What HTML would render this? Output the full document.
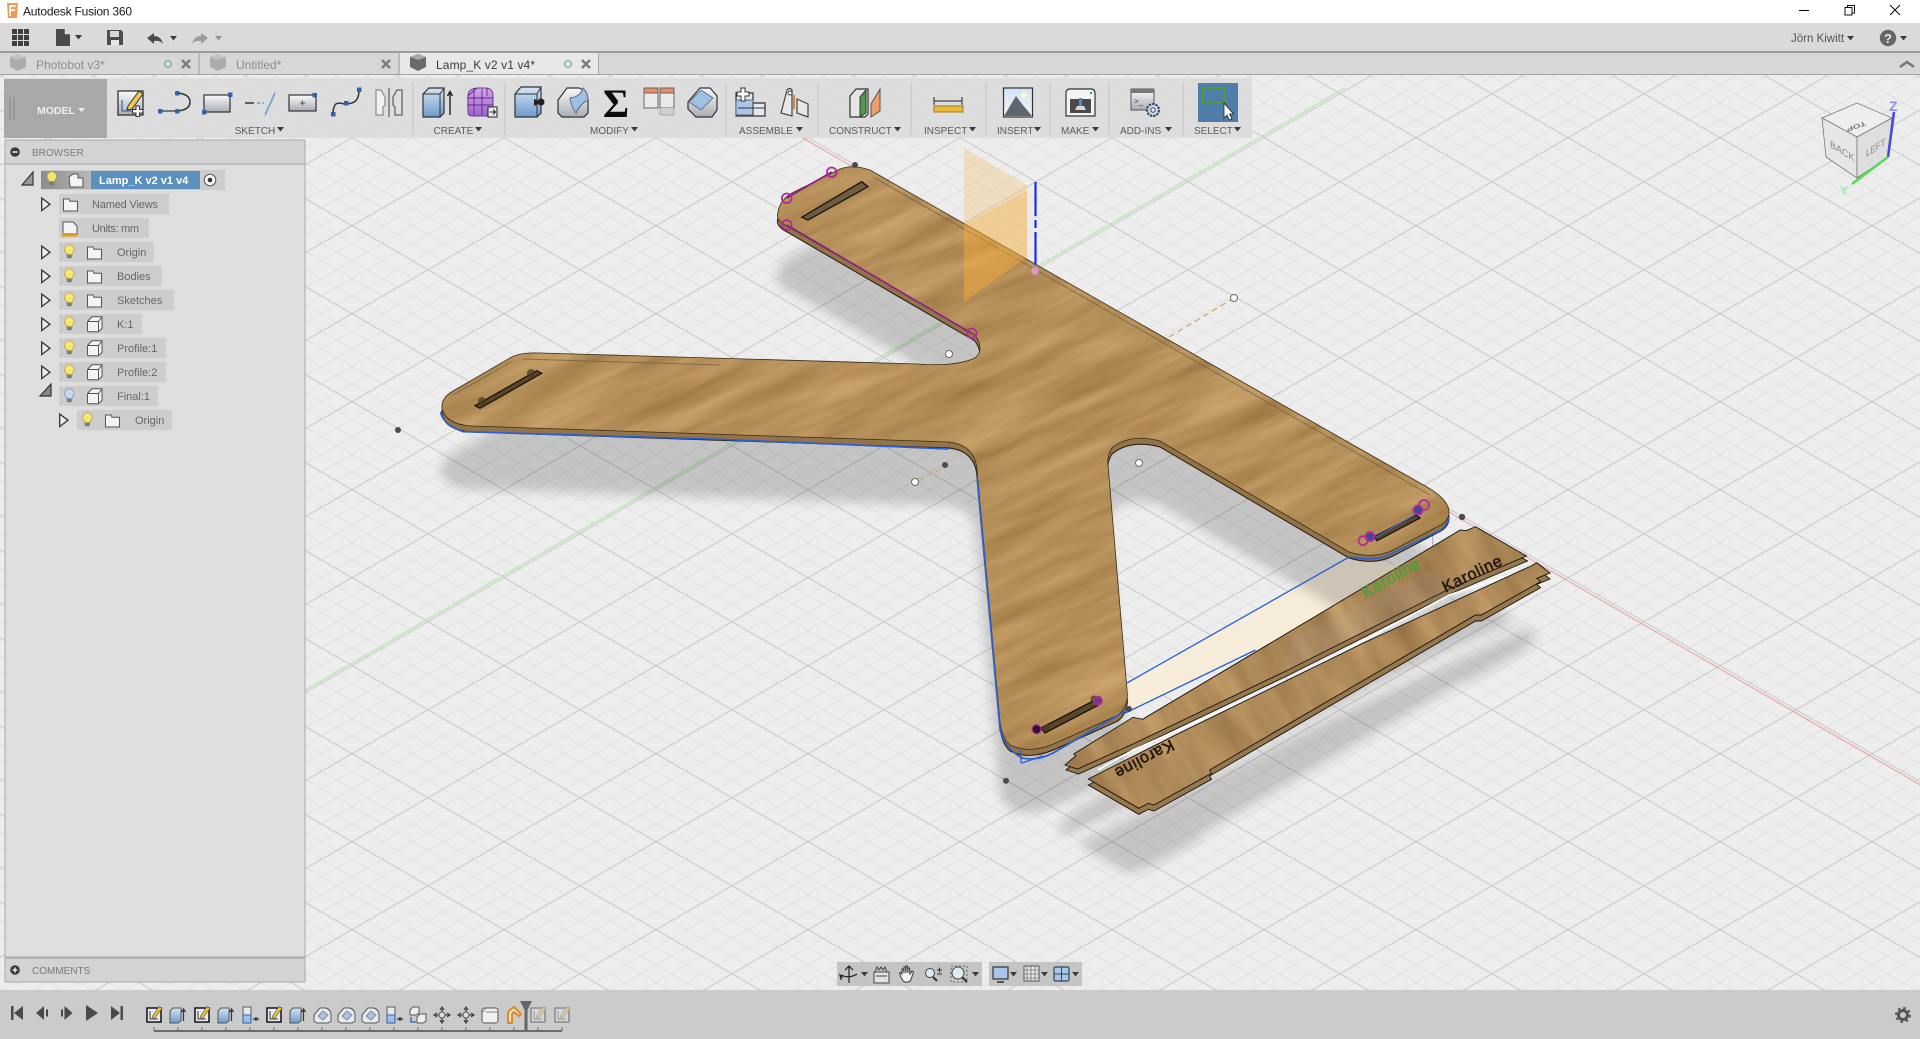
<!DOCTYPE html>
<html><head><meta charset="utf-8"><title>Autodesk Fusion 360</title>
<style>
html,body{margin:0;padding:0;width:1920px;height:1039px;background:#ededed;overflow:hidden}
svg{display:block;font-family:"Liberation Sans",sans-serif}
.ul{font-size:10px;fill:#5a5a5a}
.tr{font-size:11px;fill:#666}
</style></head><body>
<svg width="1920" height="1039" viewBox="0 0 1920 1039" xmlns="http://www.w3.org/2000/svg">
<defs>
<pattern id="grid" patternUnits="userSpaceOnUse" width="152" height="88" patternTransform="translate(504 665.67)">
<path fill="none" stroke="#e0e0e0" stroke-width=".9" d="M0-70.4L152 17.6M0-52.8L152 35.2M0-35.2L152 52.8M0-17.6L152 70.4M0 17.6L152 105.6M0 35.2L152 123.2M0 52.8L152 140.8M0 70.4L152 158.4M0 17.6L152-70.4M0 35.2L152-52.8M0 52.8L152-35.2M0 70.4L152-17.6M0 105.6L152 17.6M0 123.2L152 35.2M0 140.8L152 52.8M0 158.4L152 70.4"/>
<path fill="none" stroke="#c8c8c8" stroke-width="1" d="M0-88L152 0M0 0L152 88M0 88L152 176M0 0L152-88M0 88L152 0M0 176L152 88"/>
</pattern>
<filter id="wood" filterUnits="userSpaceOnUse" x="0" y="0" width="1600" height="1500" color-interpolation-filters="sRGB">
<feTurbulence type="fractalNoise" baseFrequency="0.008 0.06" numOctaves="4" seed="7"/>
<feColorMatrix type="matrix" values=".22 0 0 0 .6  .21 0 0 0 .455  .2 0 0 0 .25  0 0 0 0 1"/>
</filter>
<filter id="wood2" filterUnits="userSpaceOnUse" x="0" y="0" width="1200" height="900" color-interpolation-filters="sRGB">
<feTurbulence type="fractalNoise" baseFrequency="0.035 0.008" numOctaves="3" seed="11"/>
<feColorMatrix type="matrix" values=".27 0 0 0 .55  .25 0 0 0 .415  .2 0 0 0 .25  0 0 0 0 1"/>
</filter>
<pattern id="wp" patternUnits="userSpaceOnUse" width="1600" height="1500" patternTransform="translate(200 -200) rotate(-24 800 700)"><rect width="1600" height="1500" filter="url(#wood)"/></pattern>
<pattern id="wq" patternUnits="userSpaceOnUse" width="1200" height="900" patternTransform="translate(700 200) rotate(-30 600 450)"><rect width="1200" height="900" filter="url(#wood2)"/></pattern>
<filter id="blur" x="-20%" y="-20%" width="140%" height="140%"><feGaussianBlur stdDeviation="5.5"/></filter>
<path id="board" d="M778 212Q780 200 792 193L840 169Q853 164 870 170L1427 487Q1449 500 1449 512Q1449 522 1437 527L1395 549Q1375 560 1349 552L1160 441Q1130 433 1112 448Q1107 455 1108 465L1127 690Q1129 706 1118 715L1058 742Q1030 755 1010 745Q1002 738 1000 722L977 470Q975 445 949 442L471 426Q445 424 442 408Q441 398 453 391L510 358Q520 352 540 353L918 364Q955 367 975 358Q985 350 975 335L787 226Q775 220 778 212Z"/>
<polygon id="sa" points="1065,765 1075.7,756 1073.8,754 1133,717.3 1142.6,719.3 1460.3,530 1466,530.7 1475.6,526.7 1526.5,556 1449,589 1286,671 1133,744 1077.6,769"/>
<polygon id="sb" points="1088.3,779 1179,733.3 1362.7,643.3 1531,566 1536.8,562.7 1550,573 1536.8,578.3 1540.6,581.7 1481.3,615 1475.6,615 1209.6,770 1211.5,773.3 1154,805 1148.4,803.3 1138.8,808.3"/>
<linearGradient id="g1" x1="0" y1="0" x2="0" y2="1"><stop offset="0" stop-color="#fbfbfb"/><stop offset="1" stop-color="#a8adb4"/></linearGradient>
<linearGradient id="gb" x1="0" y1="0" x2="0" y2="1"><stop offset="0" stop-color="#d5e4f3"/><stop offset="1" stop-color="#6d9bcd"/></linearGradient>
<linearGradient id="gp" x1="0" y1="0" x2="0" y2="1"><stop offset="0" stop-color="#d9a4ea"/><stop offset="1" stop-color="#9b62d0"/></linearGradient>
<linearGradient id="root" x1="0" y1="0" x2="1" y2="0"><stop offset="0" stop-color="#8c8c8c"/><stop offset="1" stop-color="#b8b8b8"/></linearGradient>
<linearGradient id="sky" x1="0" y1="0" x2="0" y2="1"><stop offset="0" stop-color="#cfe3f7"/><stop offset="1" stop-color="#f3f4f0"/></linearGradient>
<path id="c" d="M0 0h7l-3.5 4.5z" fill="#3a3a3a"/>
<g id="bulb"><path d="M0 4.5a4.8 4.8 0 1 1 9.6 0c0 2.2-1.8 3-2 5H2c-.2-2-2-2.8-2-5z" fill="#f8e66a" stroke="#a89a50" stroke-width=".7"/><rect x="2.3" y="9.7" width="5" height="3.6" rx="1" fill="#7a7a82"/></g>
<g id="bulbb"><path d="M0 4.5a4.8 4.8 0 1 1 9.6 0c0 2.2-1.8 3-2 5H2c-.2-2-2-2.8-2-5z" fill="#c5d8f2" stroke="#7d8aa8" stroke-width=".7"/><rect x="2.3" y="9.7" width="5" height="3.6" rx="1" fill="#7a7a82"/></g>
<path id="fold" d="M.5 1h5.5l1 2.2h7.5v9.800H.5z" fill="#f4f4f4" stroke="#555" stroke-width="1"/>
<path id="cube" d="M.5 5.500L5 .8h10v11.500l-3.500 3.500H2q-1.500 0-1.500-1.500zM.8 5.500H11.500V15.500M11.500 5.500L15 1" fill="#f4f4f4" stroke="#555" stroke-width="1"/>
<path id="tri" d="M.7 0L9 6.300.7 12.600z" fill="#eee" stroke="#333" stroke-width="1.300"/>
<g id="tS"><rect x="-7" y="1" width="14" height="14" fill="#e8eef6" stroke="#111" stroke-width="1.500"/><path d="M-4 4v8h8" fill="none" stroke="#333"/><path d="M-2 10L5-.5 8 1.500 0 12z" fill="#f0c53a" stroke="#444" stroke-width=".6"/></g>
<g id="tE"><path d="M-8 4l3-3h8v13l-3 2h-8z" fill="url(#gb)" stroke="#555"/><path d="M5.500 14V2M3.500 5l2-3 2 3" fill="none" stroke="#333" stroke-width="1.200"/></g>
<g id="tR"><rect x="-7" y="0" width="8" height="8" fill="#e8e8e8" stroke="#555"/><rect x="-7" y="8" width="8" height="8" fill="#9fc0e4" stroke="#2d5fa8"/><path d="M3 12h6M6 10v4" stroke="#222" stroke-width="1.300"/></g>
<g id="tF"><path d="M-8 8l6-7h6q5 2 5 7v6l-3 2h-11l-3-2z" fill="#e8ecf1" stroke="#555"/><path d="M-4 9l5-5 5 4-5 5z" fill="#a8c3e0" stroke="#88a"/></g>
<g id="tM"><path d="M0 1v14M-8 8h16M-2 3l2-3 2 3M-2 13l2 3 2-3M-5 6l-3 2 3 2M5 6l3 2-3 2" fill="none" stroke="#444" stroke-width="1.200"/><circle r="3" cy="8" fill="#ddd" stroke="#555"/></g>
</defs>

<!-- viewport -->
<rect width="1920" height="1039" fill="#ededed"/>
<rect y="74" width="1920" height="925" fill="url(#grid)"/>
<path d="M305 690.3L1345 88" stroke="#b7e6ae" stroke-width="1.300" fill="none"/>
<path d="M740 101.600L1920 784.700" stroke="#eba8a8" stroke-width="1.200" fill="none"/>

<!-- construction plane -->
<polygon points="1127,683 1347,558 1433,570 1255,650 1125,713" fill="#f8ecd8" opacity=".9"/>

<!-- shadows -->
<g filter="url(#blur)" opacity=".17">
<use href="#board" transform="translate(-1 63)"/>
<g transform="translate(-10 65)"><use href="#sa"/><use href="#sb"/></g>
</g>

<path d="M1432.700 510V570L1294 635" stroke="#8e94ad" stroke-width="1" fill="none" opacity=".8"/>
<path d="M918 481L949 465M1169 337L1234 298" stroke="#d9a772" stroke-width="1.400" stroke-dasharray="6 4" fill="none"/>

<!-- board -->
<use href="#board" transform="translate(0 6)" fill="#937448" stroke="#21180c" stroke-width="1"/>
<use href="#board" fill="url(#wp)" stroke="#3a2c16" stroke-width=".8"/>
<path d="M873 177L1430 495M523 359L720 365M453 395L513 361" stroke="#6d5a44" stroke-width="1" fill="none" opacity=".7"/>

<!-- slots -->
<polygon points="801.700,217.300 861.700,181.700 868,186.700 808,220" fill="#6e5c40" stroke="#1c140a" stroke-width="1.300"/>
<polygon points="475,405.700 536.700,370.700 541.700,373.300 480,408.300" fill="#5a4628" stroke="#1c140a" stroke-width="1.300"/>
<polygon points="1041,728 1095,700 1098.600,705 1045,733" fill="#5a4628" stroke="#1c140a" stroke-width="1.300"/>
<polygon points="1374,536.700 1416,515 1420,518 1377,540.700" fill="#5a4628" stroke="#1c140a" stroke-width="1.300"/>
<g fill="#4a3a22" opacity=".75"><circle cx="482" cy="401" r="4"/><circle cx="531" cy="373" r="4"/><circle cx="1094" cy="699" r="3.500"/><circle cx="1046" cy="728" r="3.500"/></g>
<path d="M1376 537L1418 513" stroke="#3a62d0" stroke-width="1.200"/>

<!-- selection contours -->
<path d="M440.700 411.700Q442 424 463 431.700L720 439.300L949 449M977 477L1000 729Q1004 748 1022 758Q1040 762 1060 749L1127 710M1449 517Q1447 528 1437 532L1393 553Q1378 562 1349 557" fill="none" stroke="#2d5fd0" stroke-width="1.700"/>
<path d="M1127 683L1347.400 558M1125.400 713L1255.500 650M1021.300 763.300L1043 755.700M1021 750V763" fill="none" stroke="#2d5fd0" stroke-width="1.300"/>
<path d="M786.700 225L971.700 333.300M786.700 198L831.700 172" stroke="#8a1f8a" stroke-width="1.600" fill="none"/>
<g fill="none" stroke="#b02a9c" stroke-width="1.800">
<circle cx="786.700" cy="198.300" r="4.800"/><circle cx="831.700" cy="172.300" r="4.800"/><circle cx="786.700" cy="225" r="4.800"/><circle cx="971.700" cy="333.300" r="4.800"/>
<circle cx="1424" cy="505" r="5"/><circle cx="1418" cy="510" r="4.500" fill="#3a4a90"/><circle cx="1370" cy="536.700" r="4.500" fill="#3a4a90"/><circle cx="1363" cy="540.700" r="4.500"/><circle cx="1098" cy="700.700" r="4" fill="#6a3a80"/>
</g>
<circle cx="1036.600" cy="729.300" r="4.500" fill="#3a0e30" stroke="#b02a9c" stroke-width="1.200"/>
<circle cx="1035" cy="271" r="4" fill="#d9a0b8" stroke="#c080a8"/>
<g fill="#4b4b4b"><circle cx="855" cy="165" r="3"/><circle cx="1462" cy="517" r="3.200"/><circle cx="1006" cy="780.700" r="3"/><circle cx="1129" cy="709" r="3"/><circle cx="398" cy="430" r="3"/><circle cx="945" cy="465" r="3"/></g>
<g fill="#fff" stroke="#6b6b6b"><circle cx="949" cy="354" r="3.500"/><circle cx="1139" cy="463" r="3.500"/><circle cx="915" cy="482" r="3.500"/><circle cx="1234" cy="298" r="3.500"/></g>

<!-- orange plane & axis -->
<polygon points="964,148 1027,185 1027,257 964,302" fill="#f6b54a" opacity=".28"/>
<polygon points="964,225 1027,190 1027,257 964,302" fill="#f3a931" opacity=".3"/>
<path d="M1035.500 182V216M1035.500 220V228M1035.500 232V265" stroke="#1a2ee0" stroke-width="2.200" fill="none"/>

<!-- strips -->
<g fill="#96784e" stroke="#15100a" stroke-width=".9"><use href="#sa" transform="translate(1 5)"/><use href="#sb" transform="translate(0 6)"/></g>
<path d="M1533 568L1449 595L1286 682L1133 750L1098 770" stroke="#fff" stroke-width="1.600" fill="none"/>
<g stroke="#17110a" stroke-width=".9"><use href="#sa" fill="url(#wq)"/><use href="#sb" fill="url(#wq)"/></g>
<polygon points="1294,635 1432.700,570 1449,589 1286,671" fill="#a9a3ae" opacity=".13"/>
<text x="1391" y="583" text-anchor="middle" font-size="16" fill="#46a23c" stroke="#46a23c" stroke-width=".4" transform="rotate(-29 1391 577)" letter-spacing=".8">Karoline</text>
<text x="1472" y="579" text-anchor="middle" font-size="16" fill="#241a0e" stroke="#241a0e" stroke-width=".6" transform="rotate(-26 1472 573)" letter-spacing=".8">Karoline</text>
<text x="1144.600" y="766" text-anchor="middle" font-size="16" fill="#241a0e" stroke="#241a0e" stroke-width=".6" transform="rotate(152 1144.600 760)" letter-spacing=".8">Karoline</text>

<!-- ViewCube -->
<polygon points="1822,118 1857,103 1892,118 1857,137" fill="#eeeeee" stroke="#777" stroke-width=".8"/>
<polygon points="1822,118 1826,157 1857,178 1857,137" fill="#e6e6e6" stroke="#777" stroke-width=".8"/>
<polygon points="1857,137 1857,178 1888,157 1892,118" fill="#dedede" stroke="#777" stroke-width=".8"/>
<text transform="translate(1865 121) rotate(160) scale(1.100 .7)" font-size="9" fill="#777" font-weight="bold">TOP</text>
<text transform="matrix(.9 .55 0 1 1830 147)" font-size="10" fill="#888">BACK</text>
<text transform="matrix(.8 -.5 0 1 1866 157)" font-size="10" fill="#888">LEFT</text>
<path d="M1888 157L1894 112" stroke="#4a4ae0" stroke-width="2.600"/>
<path d="M1888 157L1852 184" stroke="#5ad85a" stroke-width="2.600"/>
<text x="1889" y="111" font-size="14" font-weight="bold" fill="#8f8fe8">Z</text>
<text x="1840" y="195" font-size="13" font-weight="bold" fill="#a5eca5">Y</text>

<!-- title bar -->
<rect width="1920" height="23" fill="#fff"/>
<path d="M7 3h11l-1 15H8z" fill="#ef9a55"/><path d="M10 6h6M10 6v10M10 10h5" stroke="#fff" stroke-width="1.700" fill="none"/>
<text x="23" y="15.500" font-size="12" fill="#1a1a1a" textLength="109">Autodesk Fusion 360</text>
<path d="M1799 10.500h10" stroke="#111" stroke-width="1.100"/>
<path d="M1845 7.500h7v7.500h-7zM1847.500 7.500V5.500h7v7.500h-2.500" fill="none" stroke="#111" stroke-width="1"/>
<path d="M1890 5l10 10M1900 5l-10 10" stroke="#111" stroke-width="1.100"/>

<!-- quick toolbar -->
<rect y="23" width="1920" height="29" fill="#dadada"/>
<rect y="51" width="1920" height="2" fill="#9c9c9c"/>
<g fill="#3f3f3f"><rect x="12" y="29" width="5" height="5"/><rect x="18" y="29" width="5" height="5"/><rect x="24" y="29" width="5" height="5"/><rect x="12" y="35" width="5" height="5"/><rect x="18" y="35" width="5" height="5"/><rect x="24" y="35" width="5" height="5"/><rect x="12" y="41" width="5" height="5"/><rect x="18" y="41" width="5" height="5"/><rect x="24" y="41" width="5" height="5"/></g>
<path d="M56 29h9l5 5v12H56z" fill="#4a4a4a"/><path d="M65 29v5h5" fill="#ddd" stroke="#ddd" stroke-width=".5"/>
<use href="#c" x="75" y="35"/>
<path d="M107 30h14l2 2v13h-16z" fill="#4d4d4d"/><rect x="110" y="31" width="9" height="6" fill="#d8d8d8"/><rect x="111" y="40" width="8" height="5" fill="#e8e8e8"/>
<path d="M147 38l7-5v3q7 0 9 8-3-4-9-3v3z" fill="#4a4a4a"/><use href="#c" x="170" y="36"/>
<path d="M208 38l-7-5v3q-7 0-9 8 3-4 9-3v3z" fill="#9a9a9a"/><use href="#c" x="215" y="36" opacity=".45"/>
<text x="1791" y="42" font-size="11.500" fill="#555">Jörn Kiwitt</text><use href="#c" x="1847" y="36"/>
<circle cx="1888" cy="38" r="8.200" fill="#666"/><text x="1888" y="43" text-anchor="middle" font-size="13" font-weight="bold" fill="#e8e8e8">?</text><use href="#c" x="1900" y="36"/>

<!-- tabs -->
<rect y="53" width="1920" height="21" fill="#d7d7d7"/>
<rect y="74" width="1920" height="1" fill="#a4a4a4"/>
<rect x="198" y="53" width="2" height="21" fill="#bcbcbc"/><rect x="398" y="53" width="2" height="21" fill="#bcbcbc"/>
<rect x="400" y="53" width="198" height="21" fill="#e8e8e8"/><rect x="598" y="53" width="1" height="21" fill="#aaa"/>
<g opacity=".45"><path d="M10 57l8-3 8 3v10l-8 4-8-4z" fill="#7a7a7a"/><path d="M10 57l8 3 8-3-8-3z" fill="#aaa"/></g>
<g opacity=".45"><path d="M210 57l8-3 8 3v10l-8 4-8-4z" fill="#7a7a7a"/><path d="M210 57l8 3 8-3-8-3z" fill="#aaa"/></g>
<path d="M410 57l8-3 8 3v10l-8 4-8-4z" fill="#6a6a6a"/><path d="M410 57l8 3 8-3-8-3z" fill="#a8a8a8"/>
<text x="36" y="69" font-size="12" fill="#8c8c8c">Photobot v3*</text>
<text x="236" y="69" font-size="12" fill="#8c8c8c">Untitled*</text>
<text x="436" y="69" font-size="12" fill="#3c3c3c" textLength="99">Lamp_K v2 v1 v4*</text>
<g fill="none" stroke="#7fb39a" stroke-width="1.400"><circle cx="168" cy="64" r="3.400"/><circle cx="568" cy="64" r="3.400"/></g>
<g stroke="#7a7a7a" stroke-width="2.400" fill="none"><path d="M182 60l8 8M190 60l-8 8M382 60l8 8M390 60l-8 8M582 60l8 8M590 60l-8 8"/></g>
<path d="M1900 67l7-5 7 5" stroke="#777" stroke-width="2.600" fill="none"/>

<!-- main toolbar -->
<rect x="4" y="78" width="1248" height="60" fill="#dcdcdc" opacity=".96"/>
<rect x="4" y="79" width="103" height="59" fill="#a8a8a8"/>
<path d="M10 97v23M14 97v23" stroke="#838383"/>
<text x="37" y="114" font-size="10.500" font-weight="bold" fill="#efefef">MODEL</text><path d="M78 108h7l-3.500 4z" fill="#eee"/>
<g stroke="#c8c8c8" stroke-width="1.200"><path d="M413 83v52M505 83v52M726 83v52M818 83v52M911 83v52M986 83v52M1050 83v52M1109 83v52M1183 83v52"/></g>
<text class="ul" x="234.700" y="134">SKETCH</text><use href="#c" x="277" y="127"/>
<text class="ul" x="433.500" y="134">CREATE</text><use href="#c" x="475" y="127"/>
<text class="ul" x="590" y="134">MODIFY</text><use href="#c" x="631" y="127"/>
<text class="ul" x="739" y="134">ASSEMBLE</text><use href="#c" x="796" y="127"/>
<text class="ul" x="829" y="134">CONSTRUCT</text><use href="#c" x="894" y="127"/>
<text class="ul" x="924" y="134">INSPECT</text><use href="#c" x="969" y="127"/>
<text class="ul" x="997" y="134">INSERT</text><use href="#c" x="1034" y="127"/>
<text class="ul" x="1061" y="134">MAKE</text><use href="#c" x="1092" y="127"/>
<text class="ul" x="1120" y="134">ADD-INS</text><use href="#c" x="1165" y="127"/>
<text class="ul" x="1194" y="134">SELECT</text><use href="#c" x="1234" y="127"/>

<!-- sketch icons -->
<rect x="118" y="91" width="25" height="24" fill="url(#g1)" stroke="#333" stroke-width="1.300"/>
<path d="M122 100v11h11" stroke="#3a6bb5" stroke-width="1.300" fill="none"/>
<path d="M128 106l11-15 4 3-11 15-5 1z" fill="#f3c94a" stroke="#333" stroke-width="1"/>
<path d="M136 106h3.500v3.500h3.500v3.500h-3.500v3.500H136V113h-3.500v-3.500H136z" fill="#fff" stroke="#333" stroke-width="1"/>
<path d="M160 111h17" stroke="#555" stroke-width="1.500"/><path d="M177 93Q190 94 190 102T177 111" stroke="#333" stroke-width="1.500" fill="none"/>
<g fill="#3560a8"><rect x="158" y="109" width="4.500" height="4.500" rx="1"/><rect x="175" y="109" width="4.500" height="4.500" rx="1"/><rect x="175" y="91" width="4.500" height="4.500" rx="1"/></g>
<rect x="204" y="95" width="26" height="17" fill="url(#g1)" stroke="#333" stroke-width="1.200"/>
<g fill="#3560a8"><rect x="228" y="92.500" width="4.500" height="4.500"/><rect x="202" y="110" width="4.500" height="4.500"/></g>
<path d="M245 103h9" stroke="#333" stroke-width="1.500"/><path d="M257 103h3M262 103h2" stroke="#6fa0d5" stroke-width="1.500"/><path d="M265 115l10-22" stroke="#6f9fd5" stroke-width="1.600"/>
<rect x="289" y="95" width="27" height="16" fill="url(#g1)" stroke="#333" stroke-width="1.200"/><path d="M300 103h5M302.500 100.500v5" stroke="#555"/>
<rect x="312.500" y="93" width="4.500" height="4.500" fill="#3560a8"/>
<path d="M333 115C333 97 342 105 347 104S359 103 359 90" fill="none" stroke="#333" stroke-width="1.500"/>
<g fill="#3560a8"><rect x="331" y="112" width="4.500" height="4.500"/><rect x="344" y="101" width="4.500" height="4.500"/><rect x="357" y="87.500" width="4.500" height="4.500"/></g>
<path d="M376 90h5l4 7v8l-2 2v8h-7z" fill="#f0f0f0" stroke="#8a8a8a" stroke-width="1.200"/><path d="M389 88v29" stroke="#444"/><path d="M402 90h-5l-4 7v8l2 2v8h7z" fill="#dfdfdf" stroke="#666" stroke-width="1.300"/>
<!-- create -->
<path d="M423 94l6-6h15v25l-4 4h-17z" fill="url(#gb)" stroke="#333" stroke-width="1.200"/><path d="M423 94h17v23M440 94l4-6" fill="none" stroke="#333"/>
<path d="M450 115V92M447.500 96l2.500-4.500 2.500 4.500" fill="none" stroke="#222" stroke-width="1.400"/>
<path d="M468 96q0-8 11-8h6q8 0 8 8v17q0 3-4 3h-17q-4 0-4-4z" fill="url(#gp)" stroke="#6a3a90"/>
<path d="M467 98h26M467 105h26M474 89v26M482 89v26M468 96l9-8M487 88v8" stroke="#5a2c88" stroke-width=".9" fill="none"/>
<rect x="488" y="107" width="9" height="10" fill="#eee" stroke="#222"/><path d="M489.500 112h6M493 109.500l2.500 2.500-2.500 2.500" stroke="#222" fill="none"/>
<!-- modify -->
<path d="M515 94l6-7h20v26l-4 4h-22z" fill="url(#gb)" stroke="#333" stroke-width="1.200"/><path d="M515 94h22v23M537 94l4-7" fill="none" stroke="#333"/><path d="M534 99l8 3-8 4z" fill="#222"/><circle cx="541" cy="102" r="3.500" fill="#222"/>
<path d="M558 100l9-12h12q8 3 9 12v13l-4 4h-22l-4-4z" fill="url(#g1)" stroke="#333" stroke-width="1.200"/><path d="M570 98q10-1 13-10 5 5 5 12-8 4-12 13-5-7-6-15z" fill="#9ec0e5" stroke="#667"/>
<text x="616" y="117" text-anchor="middle" font-family="'Liberation Serif',serif" font-weight="bold" font-size="40" fill="#0c0c0c">Σ</text>
<g stroke="#666"><rect x="644" y="88" width="14" height="20" fill="#e9e9e9"/><rect x="644" y="88" width="14" height="5" fill="#ec8a62"/><rect x="660" y="88" width="14" height="20" fill="#e9e9e9"/><rect x="660" y="88" width="14" height="5" fill="#ec8a62"/></g>
<path d="M660 108v7h14v-7" fill="#cfcfcf" stroke="#aaa"/>
<path d="M688 102l12-14h10l7 8v14l-5 7h-16l-8-8z" fill="url(#g1)" stroke="#333" stroke-width="1.200"/><path d="M689 102l12-12 12 8-12 12z" fill="#9ec0e5" stroke="#678"/>
<!-- assemble -->
<path d="M736 93h17v10h12v13h-29z" fill="#e5e8ec" stroke="#333" stroke-width="1.200"/><rect x="736" y="100" width="17" height="15" fill="#a9c6e8" stroke="#567"/><path d="M753 103v13M738 108h27" stroke="#333"/>
<path d="M741 88h4v4h4v4h-4v5h-4v-5h-4v-4h4z" fill="#fff" stroke="#333"/>
<path d="M781 113l6-23q3-3 5 0v26zM797 99l11 5v13l-11-4z" fill="#e7e7e7" stroke="#444" stroke-width="1.200"/><path d="M794 95v14" stroke="#d8873c" stroke-width="2"/><circle cx="790" cy="93" r="2" fill="#fff" stroke="#444"/>
<!-- construct -->
<path d="M850 96l6-7h12v25l-3 3h-15z" fill="#e6e6e6" stroke="#333" stroke-width="1.200"/><path d="M860 97l6-7v23l-6 4z" fill="#4e9a4a" stroke="#333"/>
<path d="M871 104l9-15v22l-9 6z" fill="#ec9f68" stroke="#555"/>
<!-- inspect -->
<path d="M934 97v8M962 97v8M934 101h28" stroke="#444" stroke-width="1.200" fill="none"/>
<rect x="934" y="106" width="29" height="6" fill="#e9b93a" stroke="#9b7b22"/>
<!-- insert -->
<rect x="1003.500" y="88" width="29" height="29" fill="url(#sky)" stroke="#333" stroke-width="1.200"/>
<circle cx="1024" cy="95" r="3" fill="#fff8d0"/><path d="M1004 116l12-20 6 8 10 12z" fill="#5f6670"/>
<!-- make -->
<path d="M1066 93q0-4 4-4h21q4 0 4 4v23h-29z" fill="#f4f4f4" stroke="#333" stroke-width="1.200"/>
<rect x="1070" y="99" width="21" height="14" fill="#4a4a4a"/><path d="M1075 110h11l-2-4h-7z" fill="#d8d8d8"/><path d="M1080.500 98v8" stroke="#4e8ad0" stroke-width="3"/>
<rect x="1090" y="92" width="2" height="2" fill="#3c9a3c"/>
<!-- addins -->
<rect x="1131" y="89" width="23" height="21" fill="url(#g1)" stroke="#555"/><rect x="1131" y="89" width="23" height="4" fill="#777"/>
<text x="1134" y="104" font-size="8" fill="#333">&gt;_</text>
<circle cx="1153" cy="110" r="6" fill="#c8d8ea" stroke="#345" stroke-width="2" stroke-dasharray="2.400 1"/><circle cx="1153" cy="110" r="2.200" fill="#eef" stroke="#345"/>
<!-- select -->
<rect x="1198" y="83" width="40" height="39" fill="#517da9"/>
<rect x="1203" y="88" width="21" height="14" fill="none" stroke="#4c9b3e" stroke-width="2"/>
<path d="M1224 103v15l3-3 2.500 5 2.500-1-2.500-5h4z" fill="#fff" stroke="#222" stroke-width=".8"/>

<!-- browser panel -->
<rect x="5" y="140" width="300" height="817" fill="#dedede" stroke="#aaa"/>
<rect x="5" y="140" width="300" height="24" fill="#d3d3d3" stroke="#aaa"/>
<circle cx="15" cy="152" r="4.800" fill="#3a3a3a"/><path d="M12.500 152h5" stroke="#fff" stroke-width="1.400"/>
<text x="32" y="156" font-size="10" fill="#7a7a7a">BROWSER</text>
<g fill="#cdcdcd">
<rect x="41" y="170" width="184" height="20"/>
<rect x="59" y="194" width="110" height="20"/><rect x="59" y="218" width="90" height="20"/>
<rect x="59" y="242" width="95" height="20"/><rect x="59" y="266" width="103" height="20"/><rect x="59" y="290" width="115" height="20"/>
<rect x="59" y="314" width="83" height="20"/><rect x="59" y="338" width="107" height="20"/><rect x="59" y="362" width="107" height="20"/>
<rect x="59" y="386" width="99" height="20"/><rect x="77" y="410" width="95" height="20"/>
</g>
<rect x="41" y="171" width="50" height="18" fill="url(#root)"/><rect x="91" y="171" width="109" height="18" fill="#5b8fbe"/>
<text x="99" y="184" font-size="11" font-weight="bold" fill="#fff">Lamp_K v2 v1 v4</text>
<path d="M33 172v13H22z" fill="#999" stroke="#333" stroke-width="1.200"/>
<use href="#bulb" x="47" y="172"/>
<path d="M69 177l4-3h5v4h5v9H70z" fill="#f4f4f4" stroke="#555"/>
<circle cx="210" cy="180" r="5.800" fill="#f4f4f4" stroke="#555"/><circle cx="210" cy="180" r="2.300" fill="#333"/>
<use href="#tri" x="41" y="198"/><use href="#tri" x="41" y="246"/><use href="#tri" x="41" y="270"/><use href="#tri" x="41" y="294"/><use href="#tri" x="41" y="318"/><use href="#tri" x="41" y="342"/><use href="#tri" x="41" y="366"/><use href="#tri" x="59" y="414"/>
<path d="M51 384v12H40z" fill="#888" stroke="#333" stroke-width="1.200"/>
<use href="#fold" x="63" y="198"/>
<path d="M63 222h10l4 4v9H63z" fill="#f4f4f4" stroke="#555"/><rect x="62" y="233" width="15" height="3.500" fill="#d9a21e"/>
<use href="#bulb" x="64.500" y="245"/><use href="#bulb" x="64.500" y="269"/><use href="#bulb" x="64.500" y="293"/><use href="#bulb" x="64.500" y="317"/><use href="#bulb" x="64.500" y="341"/><use href="#bulb" x="64.500" y="365"/><use href="#bulbb" x="64.500" y="389"/><use href="#bulb" x="82.500" y="413"/>
<use href="#fold" x="87" y="246"/><use href="#fold" x="87" y="270"/><use href="#fold" x="87" y="294"/><use href="#fold" x="105" y="414"/>
<use href="#cube" x="87" y="316"/><use href="#cube" x="87" y="340"/><use href="#cube" x="87" y="364"/><use href="#cube" x="87" y="388"/>
<text class="tr" x="92" y="208" textLength="66">Named Views</text><text class="tr" x="92" y="232" textLength="47">Units: mm</text>
<text class="tr" x="117" y="256">Origin</text><text class="tr" x="117" y="280">Bodies</text><text class="tr" x="117" y="304">Sketches</text>
<text class="tr" x="117" y="328">K:1</text><text class="tr" x="117" y="352">Profile:1</text><text class="tr" x="117" y="376">Profile:2</text>
<text class="tr" x="117" y="400">Final:1</text><text class="tr" x="135" y="424">Origin</text>

<!-- comments -->
<rect x="5" y="958" width="300" height="24" fill="#d3d3d3" stroke="#aaa"/>
<circle cx="15" cy="970" r="4.800" fill="#3a3a3a"/><path d="M12.500 970h5M15 967.500v5" stroke="#fff" stroke-width="1.300"/>
<text x="32" y="974" font-size="10" fill="#7a7a7a">COMMENTS</text>

<!-- nav bar -->
<rect x="837" y="962" width="145" height="24" fill="#c4c4c4"/>
<rect x="989" y="962" width="93" height="24" fill="#c4c4c4"/>
<path d="M849 967v16M845 970l4-4 4 4M841 975q8 4 16-1M843 978l-3-3 1 5" stroke="#222" stroke-width="1.200" fill="none"/>
<use href="#c" x="861" y="972"/>
<rect x="874" y="972" width="15" height="11" fill="#e2e2e2" stroke="#444"/><path d="M876 976h11" stroke="#444"/><path d="M875 972l2-5 2 3 2-3 2 3 2-3 2 5" stroke="#444" fill="none"/>
<path d="M902 974v-5l1.500 0 .5 4v-6h1.500l.5 6 0-7h1.500l.5 7 0-5h1.500l.5 6 2-3 1.500 1-2 6q-1 4-4 4h-3q-3-2-5-9l1.500-.5z" fill="#f4f4f4" stroke="#333"/>
<circle cx="930" cy="973" r="4.500" fill="#dfe9f2" stroke="#444"/><path d="M933 977l4 4" stroke="#333" stroke-width="2"/><path d="M937 970h5M939.500 967.500v5M937 974h5" stroke="#333"/>
<rect x="951" y="966" width="16" height="16" fill="none" stroke="#666" stroke-dasharray="2 2"/><circle cx="958" cy="973" r="6" fill="#dcecee" stroke="#444"/><path d="M962 977l5 5" stroke="#333" stroke-width="2.200"/>
<use href="#c" x="972" y="972"/>
<rect x="993" y="967" width="15" height="12" fill="#a9c5e8" stroke="#333" stroke-width="1.200"/><path d="M997 982h7" stroke="#555" stroke-width="2"/>
<use href="#c" x="1010" y="972"/>
<rect x="1024" y="966" width="15" height="15" fill="#e5e5e5" stroke="#555"/><path d="M1027 966v15M1031 966v15M1035 966v15M1024 970h15M1024 974h15M1024 978h15" stroke="#777" stroke-width=".8"/>
<use href="#c" x="1041" y="972"/>
<rect x="1054" y="967" width="15" height="14" rx="1.500" fill="#a9c5e8" stroke="#345" stroke-width="1.200"/><path d="M1061.500 967v14M1054 974h15" stroke="#345"/>
<use href="#c" x="1072" y="972"/>

<!-- timeline -->
<rect y="990" width="1920" height="49" fill="#cbcbcb"/>
<g fill="#4a4a4a">
<path d="M11 1006h2.500v14H11zM23 1006v14l-9-7z"/>
<path d="M44 1006v14l-8-7zM46 1009.500h2v7h-2z"/>
<path d="M63 1009.500h-2v7h2zM64.500 1006v14l8-7z"/>
<path d="M86 1005v16l12-8z"/>
<path d="M111 1006v14l9-7zM120.500 1006h2.500v14h-2.500z"/>
</g>
<path d="M154 1031H562" stroke="#6b6b6b" stroke-width="2"/>
<path d="M154 1027v4M178 1027v4M202 1027v4M226 1027v4M250 1027v4M274 1027v4M298 1027v4M322 1027v4M346 1027v4M370 1027v4M394 1027v4M418 1027v4M442 1027v4M466 1027v4M490 1027v4M514 1027v4M538 1027v4M562 1027v4" stroke="#6b6b6b"/>
<g transform="translate(154 1007)"><use href="#tS"/></g><g transform="translate(178 1007)"><use href="#tE"/></g>
<g transform="translate(202 1007)"><use href="#tS"/></g><g transform="translate(226 1007)"><use href="#tE"/></g>
<g transform="translate(250 1007)"><use href="#tR"/></g><g transform="translate(274 1007)"><use href="#tS"/></g>
<g transform="translate(298 1007)"><use href="#tE"/></g><g transform="translate(322 1007)"><use href="#tF"/></g>
<g transform="translate(346 1007)"><use href="#tF"/></g><g transform="translate(370 1007)"><use href="#tF"/></g>
<g transform="translate(394 1007)"><use href="#tR"/></g>
<g transform="translate(418 1007)"><path d="M-8 3l3-3h6v6l-3 2h-6z" fill="#eee" stroke="#555"/><path d="M-1 10l3-3h6v7l-3 2h-6z" fill="#eee" stroke="#555"/><path d="M-7 10v5h5" stroke="#2d5fa8" stroke-width="1.300" fill="none"/></g>
<g transform="translate(442 1007)"><use href="#tM"/></g><g transform="translate(466 1007)"><use href="#tM"/></g>
<rect x="482" y="1008" width="16" height="15" rx="2.500" fill="#f0f0f0" stroke="#555"/><path d="M482.500 1012l4-4M486 1012h12" stroke="#888" fill="none"/>
<g transform="translate(514 1007)"><path d="M-6 16V8q0-3 2-5l4-3 7 7-2 2-5-4-2 2v9z" fill="#e8e8e8" stroke="#e08a1e" stroke-width="2"/></g>
<g opacity=".35" transform="translate(538 1007)"><use href="#tS"/></g><g opacity=".35" transform="translate(562 1007)"><use href="#tS"/></g>
<path d="M520 1001h12l-4.500 9v21h-3v-21z" fill="#666"/>
<circle cx="1903" cy="1015" r="4.500" fill="none" stroke="#555" stroke-width="3"/><circle cx="1903" cy="1015" r="7" fill="none" stroke="#555" stroke-width="2" stroke-dasharray="2.500 3"/>
</svg>
</body></html>
